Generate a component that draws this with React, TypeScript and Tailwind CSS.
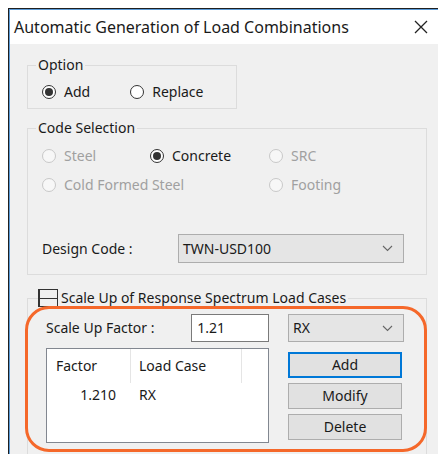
import type { ReactNode } from 'react'

const font = { fontFamily: '"Noto Sans", "Liberation Sans", sans-serif' }

const Radio = ({ checked, disabled, label }: { checked?: boolean; disabled?: boolean; label: string }) => (
  <label className={`flex items-center gap-[8px] ${disabled ? 'text-[#a0a0a0]' : 'text-[#1a1a1a]'}`}>
    <span
      className={`flex h-[14px] w-[14px] items-center justify-center rounded-full border ${
        disabled ? 'border-[#c8c8c8] bg-[#f7f7f7]' : 'border-[#333] bg-white'
      }`}
    >
      {checked && <span className="h-[8px] w-[8px] rounded-full bg-[#333]" />}
    </span>
    {label}
  </label>
)

const Chevron = () => (
  <svg width="11" height="7" viewBox="0 0 11 7" fill="none" stroke="#666" strokeWidth="1.1">
    <path d="M1 1l4.5 4.5L10 1" />
  </svg>
)

const Combo = ({ value, className }: { value: string; className: string }) => (
  <div className={`flex items-center justify-between border border-[#adadad] bg-[#e5e5e5] pl-[4px] pr-[10px] ${className}`}>
    <span>{value}</span>
    <Chevron />
  </div>
)

const Btn = ({ children, primary }: { children: ReactNode; primary?: boolean }) => (
  <button
    className={`flex h-[26px] w-[114px] items-center justify-center bg-[#e1e1e1] ${
      primary ? 'border-2 border-[#0078d7]' : 'border border-[#adadad]'
    }`}
  >
    {children}
  </button>
)

export default function App() {
  return (
    <div className="h-[454px] w-[438px] overflow-hidden bg-white pl-[8px] pt-[8px] text-[14px] leading-[20px] text-[#1a1a1a]" style={font}>
      <div className="h-full border-l border-t border-[#1f1f1f]">
        <div className="h-full border-l border-t border-[#5a9ad6] bg-[#f0f0f0]">
          {/* title bar */}
          <div className="flex h-[34px] items-center justify-between bg-white pl-[4px] pr-[10px] text-[16px]">
            <span>Automatic Generation of Load Combinations</span>
            <svg width="14" height="14" viewBox="0 0 14 14" stroke="#222" strokeWidth="1.3">
              <path d="M1 1l12 12M13 1L1 13" />
            </svg>
          </div>

          <div className="pl-[17px]">
            {/* option */}
            <fieldset className="mt-[11px] h-[54px] w-[210px] border border-[#dcdcdc] pl-[14px]">
              <legend className="px-[2px] -ml-[6px]">Option</legend>
              <div className="flex gap-[40px] pt-[7px]">
                <Radio checked label="Add" />
                <Radio label="Replace" />
              </div>
            </fieldset>

            {/* code selection */}
            <fieldset className="mt-[9px] h-[157px] w-[400px] border border-[#dcdcdc] pl-[14px]">
              <legend className="px-[2px] -ml-[6px]">Code Selection</legend>
              <div className="grid grid-cols-[108px_119px_1fr] gap-y-[9px] pt-[8px]">
                <Radio disabled label="Steel" />
                <Radio checked label="Concrete" />
                <Radio disabled label="SRC" />
                <div className="col-span-2">
                  <Radio disabled label="Cold Formed Steel" />
                </div>
                <Radio disabled label="Footing" />
              </div>
              <div className="mt-[39px] flex items-center">
                <span className="w-[136px]">Design Code :</span>
                <Combo value="TWN-USD100" className="h-[29px] w-[226px]" />
              </div>
            </fieldset>

            {/* scale up */}
            <div className="relative">
              <fieldset className="mt-[13px] h-[200px] w-[400px] border border-[#dcdcdc] pl-[18px]">
                <legend className="-ml-[8px] flex items-center gap-[3px] pr-[2px]">
                  <span className="flex h-[18px] w-[20px] items-center border border-l-2 border-[#333] bg-[#f0f0f0]">
                    <span className="h-px w-full bg-[#333]" />
                  </span>
                  Scale Up of Response Spectrum Load Cases
                </legend>
                <div className="flex pt-[6px]">
                  <div className="w-[223px]">
                    <div className="flex h-[28px] items-center">
                      <span className="w-[146px]">Scale Up Factor :</span>
                      <div className="flex h-[28px] w-[78px] items-center border border-[#7a7a7a] bg-white pl-[5px]">1.21</div>
                    </div>
                    <div className="mt-[6px] h-[95px] border border-[#828790] bg-white">
                      <div className="flex h-[34px]">
                        <span className="flex h-full w-[84px] items-center border-r border-[#e5e5e5] pl-[9px]">Factor</span>
                        <span className="flex h-full w-[111px] items-center border-r border-[#e5e5e5] pl-[8px]">Load Case</span>
                      </div>
                      <div className="flex h-[24px] items-center">
                        <span className="w-[69px] text-right">1.210</span>
                        <span className="pl-[23px]">RX</span>
                      </div>
                    </div>
                  </div>
                  <div className="ml-[19px] flex flex-col">
                    <Combo value="RX" className="h-[28px] w-[116px]" />
                    <div className="mt-[10px] flex flex-col gap-[5px]">
                      <Btn primary>Add</Btn>
                      <Btn>Modify</Btn>
                      <Btn>Delete</Btn>
                    </div>
                  </div>
                </div>
              </fieldset>
              {/* orange annotation */}
              <div className="pointer-events-none absolute left-[-2px] top-[18px] h-[146px] w-[402px] rounded-[24px] border-[3px] border-[#f5682a]" />
            </div>
          </div>
        </div>
      </div>
    </div>
  )
}
